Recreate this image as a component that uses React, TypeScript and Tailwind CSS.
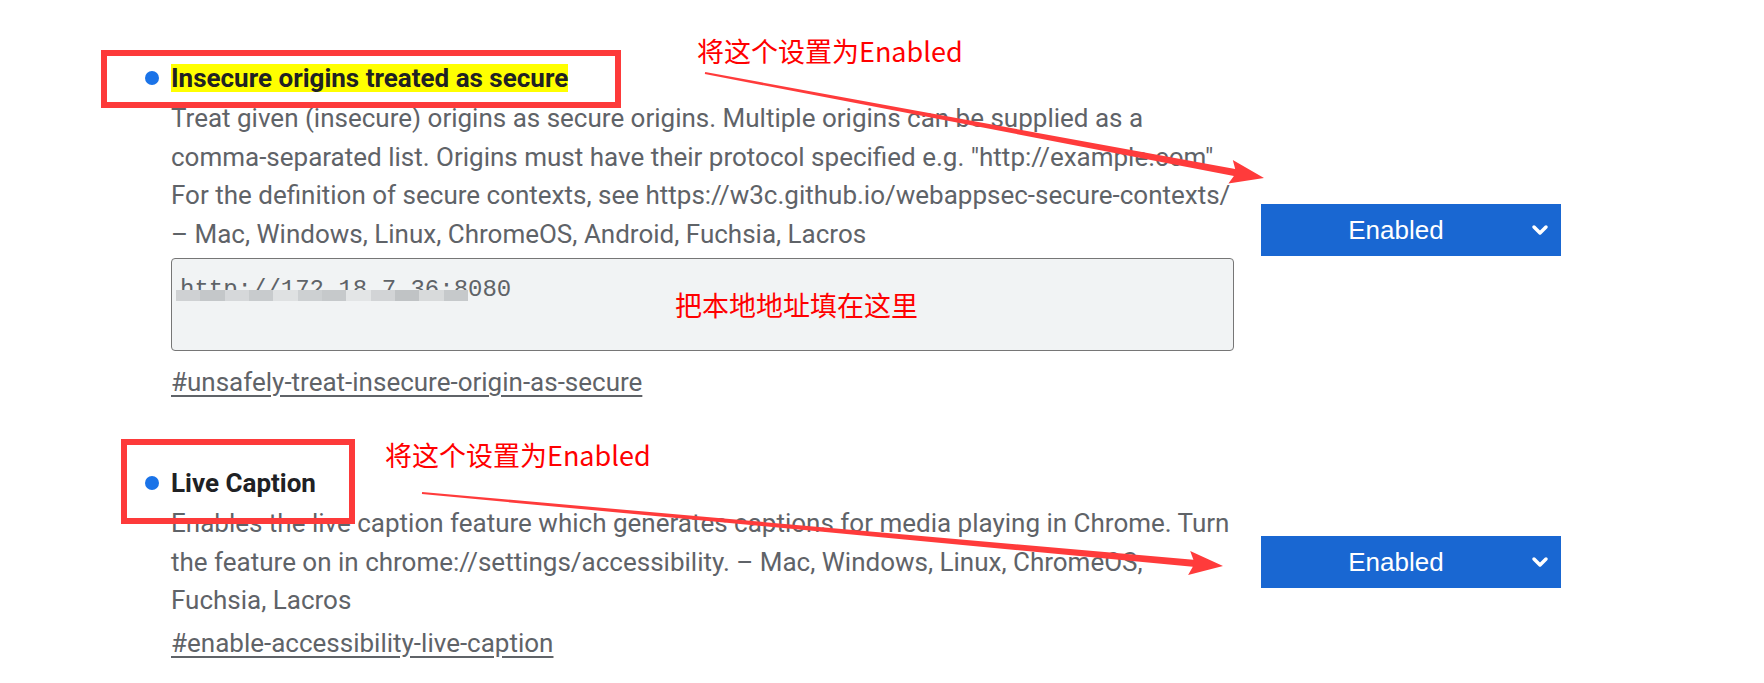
import { ChevronDown } from 'lucide-react';

type Pt = [number, number];

// tapered "snipaste" style arrow: thin tail, wider shaft, triangular head
function arrowPolygon(from: Pt, to: Pt, tail = 1, shaft = 3.5, headLen = 30, headHalf = 12) {
  const [x1, y1] = from;
  const [x2, y2] = to;
  const len = Math.hypot(x2 - x1, y2 - y1);
  const ux = (x2 - x1) / len;
  const uy = (y2 - y1) / len;
  const nx = -uy;
  const ny = ux;
  const bx = x2 - ux * headLen;
  const by = y2 - uy * headLen;
  const pts: Pt[] = [
    [x1 + nx * tail, y1 + ny * tail],
    [bx + nx * shaft, by + ny * shaft],
    [bx - ux * 4 + nx * headHalf, by - uy * 4 + ny * headHalf],
    [x2, y2],
    [bx - ux * 4 - nx * headHalf, by - uy * 4 - ny * headHalf],
    [bx - nx * shaft, by - ny * shaft],
    [x1 - nx * tail, y1 - ny * tail],
  ];
  return pts.map((p) => p.map((v) => v.toFixed(1)).join(',')).join(' ');
}

function EnabledSelect({ className }: { className: string }) {
  return (
    <div className={`relative flex h-[52px] w-[300px] shrink-0 items-center bg-[#1967d2] pr-[30px] text-white ${className}`}>
      <span className="flex-1 text-center font-['Liberation_Sans',sans-serif] text-[26px] leading-none">Enabled</span>
      <ChevronDown className="absolute right-[9px] top-[14px] h-[24px] w-[24px]" strokeWidth={3.5} />
    </div>
  );
}

function Dot() {
  return (
    <div className="flex h-[28px] w-[26px] shrink-0 items-center">
      <div className="h-[14px] w-[14px] rounded-full bg-[#1a73e8]" />
    </div>
  );
}

export default function App() {
  const descCls = "text-[26px] leading-[38.5px] text-[#5f6368] whitespace-nowrap";
  const linkCls = "inline-block text-[26px] leading-[38px] text-[#5f6368] underline decoration-[#5f6368] underline-offset-[4px]";

  return (
    <div className="relative h-[683px] w-[1764px] overflow-hidden bg-white font-['Roboto','Noto_Sans',sans-serif]">
      <div className="flex flex-col pl-[145px] pt-[64px]">
        {/* experiment 1 */}
        <div className="flex items-start gap-[27px]">
          <div className="flex w-[1089px]">
            <Dot />
            <div className="flex w-[1063px] flex-col items-start">
              <h2 className="bg-[#ffff00] text-[26px] font-bold leading-[28px] text-[#202124]">
                Insecure origins treated as secure
              </h2>
              <div className={`mt-[7px] ${descCls}`}>
                <div>Treat given (insecure) origins as secure origins. Multiple origins can be supplied as a</div>
                <div>comma-separated list. Origins must have their protocol specified e.g. "http://example.com"</div>
                <div>For the definition of secure contexts, see https://w3c.github.io/webappsec-secure-contexts/</div>
                <div>– Mac, Windows, Linux, ChromeOS, Android, Fuchsia, Lacros</div>
              </div>
              <div className="relative mt-[5px] h-[93px] w-[1063px] rounded-[4px] border-[1.5px] border-[#767676] bg-[#f1f3f4] px-[8px] pt-[19px]">
                <span className="font-['Liberation_Mono',monospace] text-[24px] leading-[24px] text-[#5f6368]">
                  http://172.18.7.36:8080
                </span>
                <div className="absolute left-[4px] top-[31px] flex h-[11px] w-[292px] blur-[0.6px]">
                  <div className="flex-1 bg-[#cfd1d3]" />
                  <div className="flex-1 bg-[#c4c7c9]" />
                  <div className="flex-1 bg-[#d6d8da]" />
                  <div className="flex-1 bg-[#c8cbcd]" />
                  <div className="flex-1 bg-[#dfe1e2]" />
                  <div className="flex-1 bg-[#cdd0d2]" />
                  <div className="flex-1 bg-[#c6c9cb]" />
                  <div className="flex-1 bg-[#e3e5e6]" />
                  <div className="flex-1 bg-[#d2d4d6]" />
                  <div className="flex-1 bg-[#c0c3c5]" />
                  <div className="flex-1 bg-[#d8dadb]" />
                  <div className="flex-1 bg-[#c6c9cb]" />
                </div>
              </div>
              <a className={`mt-[12px] ${linkCls}`}>#unsafely-treat-insecure-origin-as-secure</a>
            </div>
          </div>
          <EnabledSelect className="mt-[140px]" />
        </div>

        {/* experiment 2 */}
        <div className="mt-[68px] flex items-start gap-[27px]">
          <div className="flex w-[1089px]">
            <Dot />
            <div className="flex w-[1063px] flex-col items-start">
              <h2 className="text-[26px] font-bold leading-[28px] text-[#202124]">Live Caption</h2>
              <div className={`mt-[7px] ${descCls}`}>
                <div>Enables the live caption feature which generates captions for media playing in Chrome. Turn</div>
                <div>the feature on in chrome://settings/accessibility. – Mac, Windows, Linux, ChromeOS,</div>
                <div>Fuchsia, Lacros</div>
              </div>
              <a className={`mt-[4px] ${linkCls}`}>#enable-accessibility-live-caption</a>
            </div>
          </div>
          <EnabledSelect className="mt-[67px]" />
        </div>
      </div>

      {/* annotations drawn over the screenshot */}
      <svg className="pointer-events-none absolute left-0 top-0" width={1764} height={683}>
        <rect x={104} y={53} width={514} height={52} fill="none" stroke="#fd3a3a" strokeWidth={6} />
        <rect x={124} y={442} width={228} height={79} fill="none" stroke="#fd3a3a" strokeWidth={6} />
        <polygon points={arrowPolygon([705, 73], [1264, 178])} fill="#ff3b3b" />
        <polygon points={arrowPolygon([422, 493], [1223, 566])} fill="#ff3b3b" />
      </svg>
      <div className="pointer-events-none absolute left-[697px] top-[34px] font-['Noto_Sans_CJK_SC',sans-serif] text-[27px] leading-[34px] text-[#ff0000]">
        将这个设置为Enabled
      </div>
      <div className="pointer-events-none absolute left-[385px] top-[438px] font-['Noto_Sans_CJK_SC',sans-serif] text-[27px] leading-[34px] text-[#ff0000]">
        将这个设置为Enabled
      </div>
      <div className="pointer-events-none absolute left-[675px] top-[288px] font-['Noto_Sans_CJK_SC',sans-serif] text-[27px] leading-[34px] text-[#ff0000]">
        把本地地址填在这里
      </div>
    </div>
  );
}
